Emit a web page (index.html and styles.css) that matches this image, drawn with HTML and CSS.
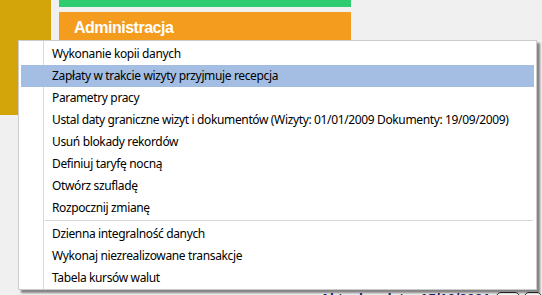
FILE: index.html
```html
<!DOCTYPE html>
<html lang="pl">
<head>
    <meta charset="UTF-8">
    <title>Administracja</title>
    <link rel="stylesheet" href="styles.css">
</head>
<body>

<div class="screen">
    <div class="tiles">
        <div class="side-tile"></div>
        <div class="tile-column">
            <div class="tile tile-green"></div>
            <div class="tile tile-orange">Administracja</div>
        </div>
    </div>

    <div class="status">
        <span class="status-text">Aktualna data: 15/10/2021</span>
        <span class="status-btn"></span>
        <span class="status-btn small"></span>
    </div>

    <ul class="menu">
        <li>Wykonanie kopii danych</li>
        <li class="active">Zapłaty w trakcie wizyty przyjmuje recepcja</li>
        <li>Parametry pracy</li>
        <li>Ustal daty graniczne wizyt i dokumentów (Wizyty: 01/01/2009 Dokumenty: 19/09/2009)</li>
        <li>Usuń blokady rekordów</li>
        <li>Definiuj taryfę nocną</li>
        <li>Otwórz szufladę</li>
        <li>Rozpocznij zmianę</li>
        <li class="separator"></li>
        <li>Dzienna integralność danych</li>
        <li>Wykonaj niezrealizowane transakcje</li>
        <li>Tabela kursów walut</li>
    </ul>
</div>

</body>
</html>
```

FILE: styles.css
```css
/* General Styling */
* {
    box-sizing: border-box;
    margin: 0;
    padding: 0;
}

body {
    font-family: "Noto Sans", sans-serif;
    background: #f0f0f0;
    width: 542px;
    height: 295px;
    overflow: hidden;
}

.screen {
    position: relative;
    height: 295px;
    display: flex;
    flex-direction: column;
}

/* Tiles behind the menu */
.tiles {
    display: flex;
    gap: 8px;
}

.side-tile {
    width: 51px;
    height: 115px;
    background: #d4a50b;
}

.tile-column {
    display: flex;
    flex-direction: column;
    gap: 5px;
}

.tile {
    width: 292px;
}

.tile-green {
    height: 7px;
    background: #2ecc71;
}

.tile-orange {
    height: 40px;
    background: #f39c1d;
    color: #ffffff;
    font-family: "Liberation Sans", Arial, sans-serif;
    font-weight: bold;
    font-size: 16px;
    letter-spacing: -0.5px;
    padding: 7px 0 0 15px;
}

/* Status line at the bottom */
.status {
    margin-top: auto;
    height: 5px;
    display: flex;
    align-items: flex-start;
    padding-left: 320px;
    white-space: nowrap;
}

.status-text {
    color: #1c1c6b;
    font-family: "Liberation Sans", Arial, sans-serif;
    font-weight: bold;
    font-size: 14px;
    line-height: 1;
    margin-top: 2px;
    margin-right: 6px;
}

.status-btn {
    width: 26px;
    height: 12px;
    margin-top: 2px;
    border: 1px solid #333333;
    border-radius: 5px 5px 0 0;
    background: #ffffff;
}

.status-btn.small {
    width: 20px;
    margin-left: 4px;
}

/* Context menu */
.menu {
    position: absolute;
    left: 18px;
    top: 40px;
    width: 519px;
    list-style: none;
    background: #ffffff;
    border: 1px solid #cccccc;
    padding: 2px 2px 0 2px;
    box-shadow: 3px 3px 2px rgba(0, 0, 0, 0.45);
    font-size: 12px;
    letter-spacing: -0.36px;
    color: #000000;
}

.menu::before {
    content: "";
    position: absolute;
    left: 24px;
    top: 0;
    bottom: 0;
    border-left: 1px solid #d7d7d7;
}

.menu li {
    position: relative;
    height: 22px;
    line-height: 22px;
    padding-left: 31px;
    white-space: nowrap;
}

.menu li.active {
    background: #a4bee3;
}

.menu li.separator {
    height: 3px;
    margin-left: 24px;
    margin-right: 1px;
    border-top: 1px solid #d7d7d7;
    margin-top: 1px;
}
```
